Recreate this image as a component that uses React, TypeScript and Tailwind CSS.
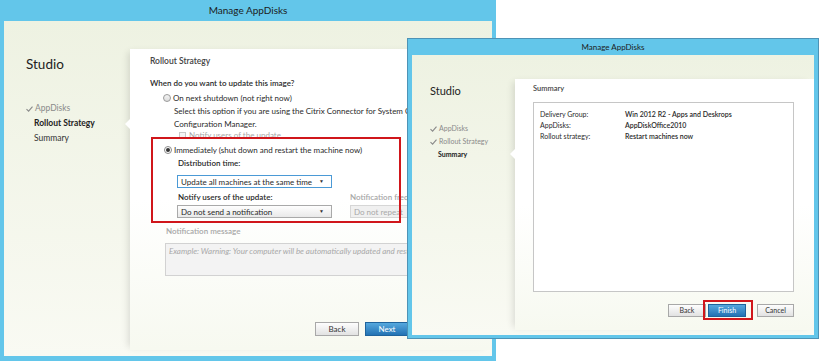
import React from 'react';

const font = { fontFamily: 'Lato, "Open Sans", Arial, sans-serif' };

function GrayButton({ label, className = '' }: { label: string; className?: string }) {
  return (
    <div className={`flex items-center justify-center border border-[#a8a8a8] bg-gradient-to-b from-[#fdfdfd] to-[#e2e2e2] text-[#333] ${className}`}>
      {label}
    </div>
  );
}

function BlueButton({ label, className = '' }: { label: string; className?: string }) {
  return (
    <div className={`flex items-center justify-center border border-[#1f639c] bg-gradient-to-b from-[#55a8de] to-[#2272b4] text-white ${className}`}>
      {label}
    </div>
  );
}

function Notch({ top }: { top: string }) {
  return (
    <div className={`absolute left-[-5px] ${top} h-0 w-0 border-y-[5px] border-r-[5px] border-y-transparent border-r-white`} />
  );
}

function Check() {
  return (
    <svg width="7" height="6" viewBox="0 0 7 6" className="mr-[2px] shrink-0">
      <path d="M0.5 3.2 L2.6 5.2 L6.5 0.6" fill="none" stroke="#8a8a8a" strokeWidth="1.1" />
    </svg>
  );
}

function RolloutWindow() {
  return (
    <div className="absolute left-0 top-0 flex h-[361px] w-[496px] flex-col bg-[#63c6ea] px-[4px] pb-[5px]">
      <div className="flex h-[21px] items-center justify-center text-[10px] text-[#1c1c1c]">Manage AppDisks</div>
      <div className="flex flex-1 bg-gradient-to-b from-[#eef2e2] to-[#f9faf3]">
        <aside className="w-[126px] shrink-0 pl-[22px] pt-[33px]">
          <div className="text-[13.5px] leading-[20px] text-[#222]">Studio</div>
          <div className="mt-[27px] flex h-[15px] items-center text-[8.5px] text-[#8a8a8a]">
            <Check />AppDisks
          </div>
          <div className="flex h-[15px] items-center pl-[8px] text-[8.5px] font-bold text-[#222]">Rollout Strategy</div>
          <div className="flex h-[15px] items-center pl-[8px] text-[8.5px] text-[#333]">Summary</div>
        </aside>
        <main className="relative mb-[6px] mt-[28px] flex min-w-0 flex-1 flex-col bg-gradient-to-b from-white via-white to-[#f7f9f0] pl-[20px] pr-[33px] text-[8px] text-[#2a2a2a] shadow-[-5px_0_7px_-3px_rgba(0,0,0,0.12)]">
          <Notch top="top-[70px]" />
          <div className="mt-[6px] h-[13px] text-[8.5px] font-semibold leading-[13px] text-[#444]">Rollout Strategy</div>
          <div className="mt-[9px] h-[13px] font-semibold leading-[13px]">When do you want to update this image?</div>
          <div className="mt-[1px] flex h-[13px] items-center pl-[13px]">
            <span className="mr-[2px] h-[8px] w-[8px] shrink-0 rounded-full border border-[#9a9a9a] bg-gradient-to-b from-[#f4f4f4] to-[#dcdcdc]" />
            On next shutdown (not right now)
          </div>
          <div className="mt-[1px] h-[13px] whitespace-nowrap pl-[24px] leading-[13px]">Select this option if you are using the Citrix Connector for System Center</div>
          <div className="h-[13px] pl-[24px] leading-[13px]">Configuration Manager.</div>
          <div className="-mt-[2px] flex h-[12px] items-center pl-[29px] text-[#a8a8a8]">
            <span className="mr-[3px] h-[7px] w-[7px] shrink-0 border border-[#c8c8c8] bg-[#f4f4f4]" />
            Notify users of the update
          </div>
          <div className="mt-[2px] flex h-[13px] items-center whitespace-nowrap pl-[14px]">
            <span className="mr-[2px] flex h-[8px] w-[8px] shrink-0 items-center justify-center rounded-full border border-[#8a8a8a] bg-white">
              <span className="h-[4px] w-[4px] rounded-full bg-[#333]" />
            </span>
            Immediately (shut down and restart the machine now)
          </div>
          <div className="mt-[1px] h-[13px] pl-[28px] font-semibold leading-[13px]">Distribution time:</div>
          <div className="mt-[5px] pl-[27px]">
            <div className="flex h-[13px] w-[155px] items-center justify-between whitespace-nowrap border border-[#4b9ad6] bg-white pl-[3px] pr-[7px]">
              <span>Update all machines at the same time</span>
              <span className="text-[5px] text-[#333]">▼</span>
            </div>
          </div>
          <div className="mt-[2px] flex h-[13px] items-center whitespace-nowrap pl-[28px] font-semibold">
            <span className="w-[172px] shrink-0">Notify users of the update:</span>
            <span className="text-[#a8a8a8]">Notification frequency:</span>
          </div>
          <div className="mt-[2px] flex whitespace-nowrap pl-[27px]">
            <div className="flex h-[13px] w-[155px] shrink-0 items-center justify-between border border-[#a9a9a9] bg-gradient-to-b from-[#fefefe] to-[#e9e9e9] pl-[3px] pr-[7px]">
              <span>Do not send a notification</span>
              <span className="text-[5px] text-[#333]">▼</span>
            </div>
            <div className="ml-[18px] flex h-[13px] w-[110px] shrink-0 items-center border border-[#d6d6d6] bg-[#f0f0f0] pl-[3px] text-[#a8a8a8]">
              Do not repeat
            </div>
          </div>
          <div className="mt-[7px] h-[13px] pl-[16px] font-semibold leading-[13px] text-[#a8a8a8]">Notification message</div>
          <div className="mt-[5px] pl-[15px]">
            <div className="h-[33px] w-[300px] overflow-hidden whitespace-nowrap border border-[#d2d2d2] bg-[#f3f3f3] px-[3px] py-[1px] italic leading-[12px] text-[#a8a8a8]">
              Example:  Warning: Your computer will be automatically updated and restarted.
            </div>
          </div>
          <div className="mt-[46px] flex justify-end gap-[6px]">
            <GrayButton label="Back" className="h-[14px] w-[44px]" />
            <BlueButton label="Next" className="h-[14px] w-[44px]" />
            <GrayButton label="Cancel" className="h-[14px] w-[44px]" />
          </div>
        </main>
      </div>
      <div className="absolute left-[151px] top-[137px] h-[86px] w-[250px] border-2 border-[#d0161b]" />
    </div>
  );
}

function SummaryWindow() {
  const rows = [
    ['Delivery Group:', 'Win 2012 R2 - Apps and Deskrops'],
    ['AppDisks:', 'AppDiskOffice2010'],
    ['Rollout strategy:', 'Restart machines now'],
  ];
  return (
    <div className="absolute left-[407px] top-[38px] flex h-[301px] w-[412px] flex-col border border-[#4d93b6] bg-[#63c6ea] px-[4px] pb-[3px]">
      <div className="flex h-[16px] items-center justify-center text-[8px] text-[#1c1c1c]">Manage AppDisks</div>
      <div className="flex flex-1 bg-gradient-to-b from-[#eef2e2] to-[#f9faf3]">
        <aside className="w-[103px] shrink-0 pl-[18px] pt-[28px]">
          <div className="text-[11px] leading-[16px] text-[#222]">Studio</div>
          <div className="mt-[23px] flex h-[13px] items-center text-[7px] text-[#8a8a8a]">
            <Check />AppDisks
          </div>
          <div className="flex h-[13px] items-center text-[7px] text-[#8a8a8a]">
            <Check />Rollout Strategy
          </div>
          <div className="flex h-[13px] items-center pl-[8px] text-[7px] font-bold text-[#222]">Summary</div>
        </aside>
        <main className="relative mb-[5px] mt-[24px] flex min-w-0 flex-1 flex-col bg-gradient-to-b from-white via-white to-[#f7f9f0] pl-[18px] pr-[20px] text-[7px] text-[#2a2a2a] shadow-[-5px_0_7px_-3px_rgba(0,0,0,0.12)]">
          <Notch top="top-[70px]" />
          <div className="mt-[4px] h-[11px] text-[7.5px] font-semibold leading-[11px] text-[#444]">Summary</div>
          <div className="mt-[8px] h-[190px] border border-[#c6c6c6] bg-white px-[6px] pt-[6px]">
            {rows.map(([k, v]) => (
              <div key={k} className="flex h-[11px] items-center whitespace-nowrap">
                <span className="w-[85px] shrink-0">{k}</span>
                <span className="font-semibold">{v}</span>
              </div>
            ))}
          </div>
          <div className="mt-[12px] flex justify-end">
            <GrayButton label="Back" className="h-[13px] w-[38px]" />
            <BlueButton label="Finish" className="ml-[2px] h-[13px] w-[38px]" />
            <GrayButton label="Cancel" className="ml-[11px] h-[13px] w-[37px]" />
          </div>
        </main>
      </div>
      <div className="absolute left-[295px] top-[261px] h-[20px] w-[50px] border-2 border-[#d0161b]" />
    </div>
  );
}

export default function App() {
  return (
    <div className="relative h-[363px] w-[820px] overflow-hidden bg-white" style={font}>
      <RolloutWindow />
      <SummaryWindow />
    </div>
  );
}
